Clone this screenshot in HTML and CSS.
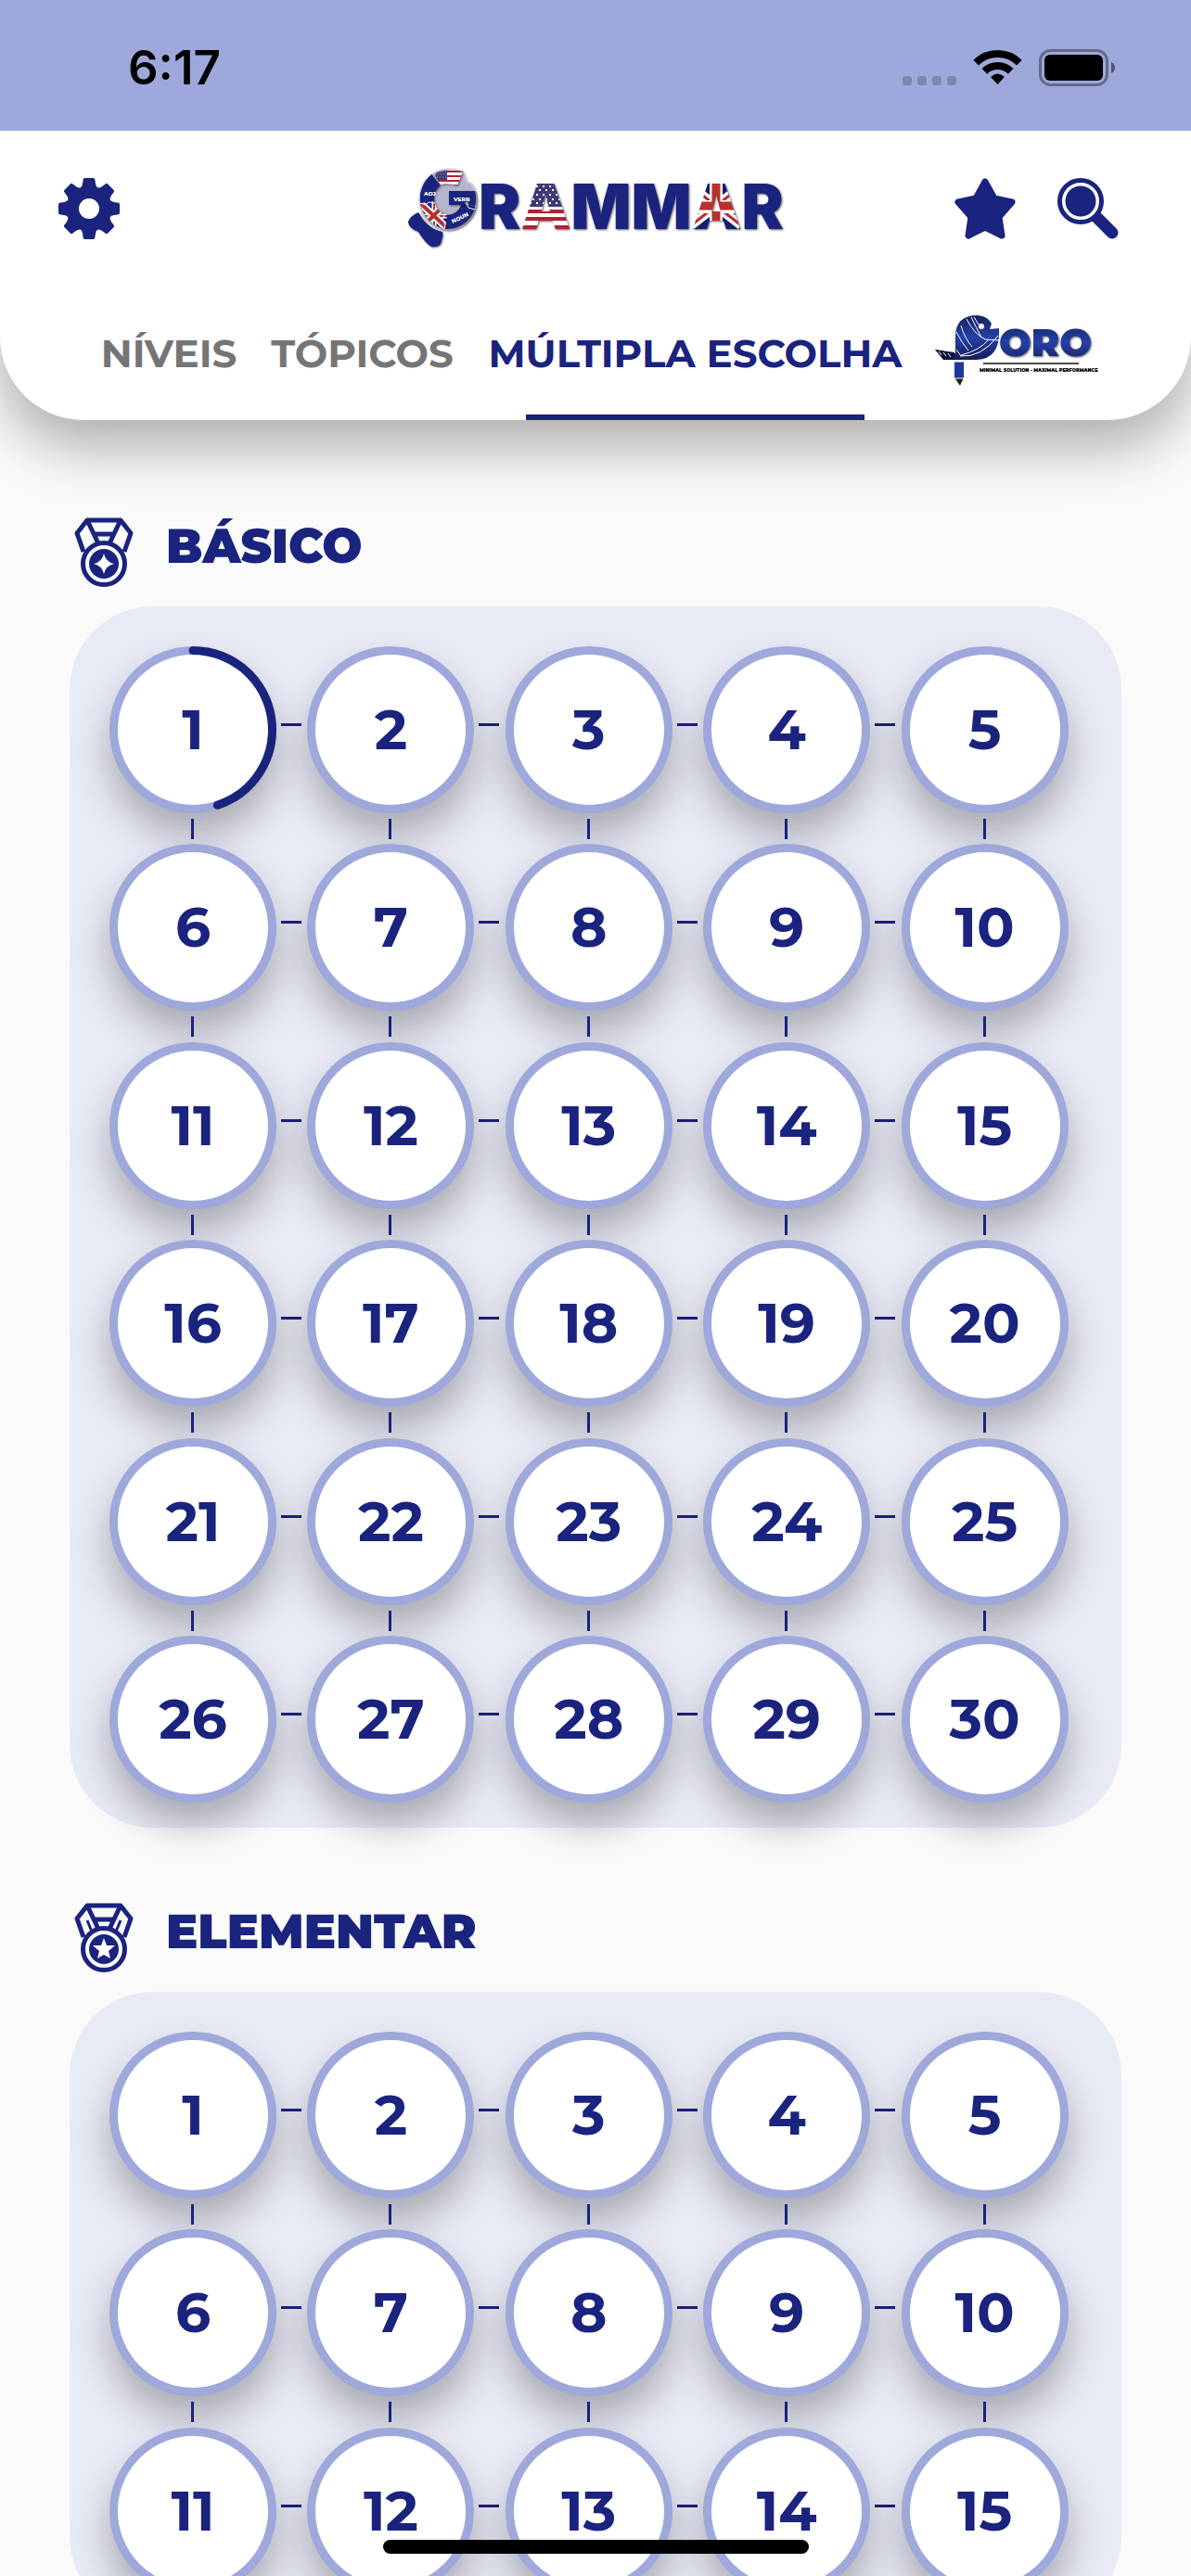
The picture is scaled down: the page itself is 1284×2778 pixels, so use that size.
FILE: index.html
```html
<!DOCTYPE html>
<html lang="pt-BR">

<head>
    <meta charset="UTF-8">
    <meta name="viewport" content="width=device-width, initial-scale=1.0">

    <title>Grammar</title>
    <link rel="stylesheet" href="styles.css">
</head>

<body>
    <div class="status">
        <span class="time">6:17</span>
        <div class="status-icons">
            <svg class="dots" width="58" height="38" viewBox="0 0 58 38">
                <rect x="0" y="28" width="10" height="10" rx="3" />
                <rect x="16" y="28" width="10" height="10" rx="3" />
                <rect x="32" y="28" width="10" height="10" rx="3" />
                <rect x="48" y="28" width="10" height="10" rx="3" />
            </svg>
            <svg width="51" height="38" viewBox="0 0 51 38">
                <path d="M2.2 13.7A33 33 0 0 1 48.8 13.7" fill="none" stroke="#000" stroke-width="8" />
                <path d="M11.4 22.9A20 20 0 0 1 39.6 22.9" fill="none" stroke="#000" stroke-width="8" />
                <path d="M25.5 37L18 29Q25.500 22 33 29Z" />
            </svg>
            <svg width="82" height="40" viewBox="0 0 82 40">
                <rect x="1.500" y="1.500" width="72" height="37" rx="11" fill="none" stroke="#646a8c" stroke-width="3" />
                <rect x="6" y="6" width="63" height="28" rx="6" />
                <path d="M78 14Q82 16 82 20T78 26Z" fill="#4f5470" />
            </svg>
        </div>
    </div>

    <header class="header">
        <div class="bar">
            <button class="icon-btn" aria-label="Configurações">
                <svg width="66" height="66" viewBox="0 0 66 66">
                    <defs>
                        <path id="tooth" d="M29 0H37Q39 0 39.200 1L40 6Q40.500 9.500 42.400 10.400L37.500 22.200A12 12 0 0 0 28.500 22.200L23.600 10.400Q25.500 9.500 26 6L26.800 1Q27 0 29 0Z" />
                    </defs>
                    <use href="#tooth" />
                    <use href="#tooth" transform="rotate(45 33 33)" />
                    <use href="#tooth" transform="rotate(90 33 33)" />
                    <use href="#tooth" transform="rotate(135 33 33)" />
                    <use href="#tooth" transform="rotate(180 33 33)" />
                    <use href="#tooth" transform="rotate(225 33 33)" />
                    <use href="#tooth" transform="rotate(270 33 33)" />
                    <use href="#tooth" transform="rotate(315 33 33)" />
                    <circle cx="33" cy="33" r="17" fill="none" stroke="#1a237e" stroke-width="12" />
                </svg>
            </button>

            <svg class="logo" width="406" height="88" viewBox="0 0 406 88">
                <defs>
                    <pattern id="usa" x="118" y="16" width="60" height="54" patternUnits="userSpaceOnUse">
                        <rect width="60" height="54" fill="#fff" />
                        <rect width="60" height="26" fill="#3c3b78" />
                        <path d="M0 4H60M0 13H60M0 22H60" stroke="#fff" stroke-width="2" stroke-dasharray="2 5" />
                        <path d="M3 8H60M3 18H60" stroke="#fff" stroke-width="2" stroke-dasharray="2 5" />
                        <path d="M0 31H60M0 39H60M0 48H60" stroke="#b22234" stroke-width="4" />
                    </pattern>
                    <pattern id="uk" x="306" y="16" width="54" height="50" patternUnits="userSpaceOnUse">
                        <rect width="54" height="50" fill="#12206b" />
                        <path d="M0 4L54 46M54 4L0 46" stroke="#fff" stroke-width="10" />
                        <path d="M0 4L54 46M54 4L0 46" stroke="#b83030" stroke-width="3" />
                        <path d="M27 0V50M0 26H54" stroke="#fff" stroke-width="14" />
                        <path d="M27 0V50M0 25H54" stroke="#b83030" stroke-width="9" />
                    </pattern>
                    <pattern id="usa-small" x="28" y="2" width="40" height="20" patternUnits="userSpaceOnUse">
                        <rect width="40" height="20" fill="#fff" />
                        <path d="M0 2H40M0 7H40M0 12H40M0 17H40" stroke="#b22234" stroke-width="2" />
                        <rect width="15" height="11" fill="#3c3b78" />
                        <path d="M1 2H15M2 5H15M1 8H15" stroke="#aaa9cc" stroke-dasharray="1 2" />
                    </pattern>
                    <pattern id="uk-small" x="13" y="37" width="32" height="30" patternUnits="userSpaceOnUse">
                        <rect width="32" height="30" fill="#1a237e" />
                        <path d="M0 15H32M16 0V30" stroke="#fff" stroke-width="5" />
                        <path d="M0 15H32M16 0V30" stroke="#b83030" stroke-width="2" />
                        <path d="M2 2L30 28M28 2L2 28" stroke="#fff" stroke-width="8" />
                        <path d="M2 2L30 28M28 2L2 28" stroke="#b83030" stroke-width="4" />
                    </pattern>
                </defs>
                <g class="badge">
                    <path d="M12 48Q3 52 1 58Q1 65 12 69Q20 82 26 85Q33 86 36 82Q39 74 38 69Q22 66 12 48Z" fill="#1a237e" />
                    <path d="M44 1Q54 1 60 5L64 15L69 17Q74 24 75 34A31 33 0 1 1 44 1Z" fill="#b5b6cc" stroke="#d5d8ea" stroke-width="1" />
                </g>
                <g class="badge" fill="none" stroke-width="15">
                    <path d="M31 13A23 25 0 0 0 22 39" stroke="#1a237e" />
                    <path d="M41 58A23 25 0 0 0 66 40" stroke="#1a237e" />
                    <path d="M22 37A23 25 0 0 0 42 58" stroke="url(#uk-small)" />
                </g>
                <g class="badge">
                    <path d="M32 5Q45 0 60 4L54 19Q45 16 36 18L30 8Z" fill="url(#usa-small)" />
                    <path d="M45 25H73Q75 33 73 41L67 40L65 36L61 40H45Z" fill="#1a237e" />
                </g>
                <path d="M14 38L20 40L23 37L30 38M40 66L41 60L38 57L40 51M63 37L66 43L73 45" fill="none" stroke="#fff" stroke-width="1" />
                <g class="logo-tiny">
                    <text x="18" y="30">ADJ</text>
                    <text x="50" y="36">VERB</text>
                    <text x="49" y="60" transform="rotate(-25 49 60)">NOUN</text>
                </g>
                <text class="logo-text" x="77" y="66">R<tspan fill="url(#usa)">A</tspan>MM<tspan fill="url(#uk)">A</tspan>R</text>
            </svg>

            <div class="actions">
                <button class="icon-btn" aria-label="Favoritos">
                    <svg width="66" height="66" viewBox="0 0 66 66">
                        <path d="M33 4L43 22L62 26L48 42L51 62L33 53L15 62L18 42L4 26L23 22Z" fill="#1a237e" stroke="#1a237e" stroke-width="7" stroke-linejoin="round" />
                    </svg>
                </button>
                <button class="icon-btn" aria-label="Pesquisar">
                    <svg width="66" height="66" viewBox="0 0 66 66">
                        <path d="M42 42L59 59" stroke="#1a237e" stroke-width="13" stroke-linecap="round" />
                        <circle cx="25" cy="25" r="22.500" fill="#fff" stroke="#1a237e" stroke-width="5" />
                        <circle cx="25" cy="25" r="16.500" />
                    </svg>
                </button>
            </div>
        </div>

        <nav class="tabs">
            <a class="tab" href="#niveis">NÍVEIS</a>
            <a class="tab" href="#topicos">TÓPICOS</a>
            <a class="tab active" href="#multipla">MÚLTIPLA ESCOLHA</a>
            <a class="tab" href="#poro" aria-label="Poro">
                <svg class="poro" width="172" height="82" viewBox="0 0 172 82">
                    <defs>
                        <linearGradient id="blue" x1="0" y1="0" x2="0" y2="1">
                            <stop offset="0" stop-color="#16205f" />
                            <stop offset=".5" stop-color="#2440a8" />
                            <stop offset="1" stop-color="#141c58" />
                        </linearGradient>
                    </defs>
                    <path d="M0 37L22 41V23Q22 0 46 0Q57 1 61 9L59 15L69 14Q71 47 45 48H12Z" fill="url(#blue)" />
                    <path d="M0 37L21 40V48H9Z" fill="#0c1238" />
                    <path d="M21 50H31V67L27 75L21 67Z" fill="#2036a0" />
                    <path d="M21 67H31L27 76Z" fill="#222" />
                    <path d="M34 4Q42 20 54 26L69 27M39 2Q44 12 50 24M28 11Q32 25 40 34M23 18Q29 30 36 38M27 44Q50 46 68 22M28 43Q48 38 58 26M23 37L28 44M21 50H31M21 68H31M42 2L49 13" fill="none" stroke="#fff" stroke-width="1" />
                    <path d="M4 39L7 43M9 40L12 44M14 41L17 45" stroke="#fff" stroke-width="1" />
                    <circle cx="50" cy="12" r="3" fill="#fff" />
                    <path d="M52 52H155" stroke="#111" stroke-width="1.500" />
                    <text class="poro-text" x="69" y="44" fill="url(#blue)">ORO</text>
                    <text class="poro-tiny" x="48" y="61">MINIMAL SOLUTION - MAXIMAL PERFORMANCE</text>
                </svg>
            </a>
        </nav>
    </header>

    <main class="content">
        <section>
            <div class="heading">
                <svg class="medal" width="62" height="76" viewBox="0 0 62 76">
                    <path d="M9 37L2 17L13 3H49L60 17L53 37M13 3L25 28M49 3L37 28M19 18H43" />
                    <circle cx="31" cy="50" r="22.500" />
                    <circle class="fill" cx="31" cy="50" r="16" />
                    <path class="hole" d="M31 39Q33 48 42 50Q33 52 31 61Q29 52 20 50Q29 48 31 39Z" />
                </svg>
                <h2>BÁSICO</h2>
            </div>
            <div class="panel">
                <div class="cell"><button class="level">1<svg class="progress" viewBox="0 0 180 180"><circle cx="90" cy="90" r="85.500" pathLength="100" stroke-dasharray="45 100" /></svg></button></div>
                <div class="cell"><button class="level">2</button></div>
                <div class="cell"><button class="level">3</button></div>
                <div class="cell"><button class="level">4</button></div>
                <div class="cell"><button class="level">5</button></div>
                <div class="cell"><button class="level">6</button></div>
                <div class="cell"><button class="level">7</button></div>
                <div class="cell"><button class="level">8</button></div>
                <div class="cell"><button class="level">9</button></div>
                <div class="cell"><button class="level">10</button></div>
                <div class="cell"><button class="level">11</button></div>
                <div class="cell"><button class="level">12</button></div>
                <div class="cell"><button class="level">13</button></div>
                <div class="cell"><button class="level">14</button></div>
                <div class="cell"><button class="level">15</button></div>
                <div class="cell"><button class="level">16</button></div>
                <div class="cell"><button class="level">17</button></div>
                <div class="cell"><button class="level">18</button></div>
                <div class="cell"><button class="level">19</button></div>
                <div class="cell"><button class="level">20</button></div>
                <div class="cell"><button class="level">21</button></div>
                <div class="cell"><button class="level">22</button></div>
                <div class="cell"><button class="level">23</button></div>
                <div class="cell"><button class="level">24</button></div>
                <div class="cell"><button class="level">25</button></div>
                <div class="cell"><button class="level">26</button></div>
                <div class="cell"><button class="level">27</button></div>
                <div class="cell"><button class="level">28</button></div>
                <div class="cell"><button class="level">29</button></div>
                <div class="cell"><button class="level">30</button></div>
            </div>
        </section>

        <section>
            <div class="heading">
                <svg class="medal" width="62" height="76" viewBox="0 0 62 76">
                    <path d="M9 37L2 17L13 3H49L60 17L53 37M13 3L25 28M49 3L37 28M19 18H43" />
                    <path class="thin" d="M13 19L18 31M49 19L44 31" />
                    <circle cx="31" cy="50" r="22.500" />
                    <circle class="fill" cx="31" cy="50" r="16" />
                    <path class="hole" d="M31 38L34 46L43 46L36 52L38 60L31 56L24 60L26 52L19 46L28 46Z" />
                </svg>
                <h2>ELEMENTAR</h2>
            </div>
            <div class="panel">
                <div class="cell"><button class="level">1</button></div>
                <div class="cell"><button class="level">2</button></div>
                <div class="cell"><button class="level">3</button></div>
                <div class="cell"><button class="level">4</button></div>
                <div class="cell"><button class="level">5</button></div>
                <div class="cell"><button class="level">6</button></div>
                <div class="cell"><button class="level">7</button></div>
                <div class="cell"><button class="level">8</button></div>
                <div class="cell"><button class="level">9</button></div>
                <div class="cell"><button class="level">10</button></div>
                <div class="cell"><button class="level">11</button></div>
                <div class="cell"><button class="level">12</button></div>
                <div class="cell"><button class="level">13</button></div>
                <div class="cell"><button class="level">14</button></div>
                <div class="cell"><button class="level">15</button></div>
            </div>
        </section>
    </main>

    <div class="home-bar"></div>
</body>

</html>
```

FILE: styles.css
```css
* {
    box-sizing: border-box;
}

body {
    margin: 0;
    height: 100vh;
    display: flex;
    flex-direction: column;
    overflow: hidden;
    background-color: #fafafa;
    color: #1a237e;
    font-family: Montserrat, Inter, sans-serif;
}

svg {
    display: block;
    overflow: visible;
}

button {
    font: inherit;
    color: inherit;
    padding: 0;
    border: none;
    background: none;
    cursor: pointer;
}

/* status bar */
.status {
    flex: none;
    height: 141px;
    padding: 4px 82px 0 138px;
    display: flex;
    align-items: center;
    justify-content: space-between;
    background-color: #9fa8da;
    color: #000;
    position: relative;
    z-index: 3;
}

.time {
    font-family: Inter, sans-serif;
    font-size: 51px;
    font-weight: 600;
    line-height: 60px;
}

.status-icons {
    display: flex;
    align-items: center;
    gap: 19px;
}

.dots {
    fill: #7f86ae;
}

/* header */
.header {
    flex: none;
    position: relative;
    z-index: 2;
    background-color: #fff;
    border-radius: 0 0 90px 90px;
    box-shadow: 0 30px 60px rgba(0, 0, 0, 0.3);
}

.bar {
    height: 168px;
    padding: 0 63px;
    display: grid;
    grid-template-columns: 1fr auto 1fr;
    align-items: center;
}

.icon-btn {
    justify-self: start;
    fill: #1a237e;
}

.actions {
    display: flex;
    gap: 45px;
    justify-self: end;
    padding-right: 15px;
}

.logo-text {
    font-family: Inter, sans-serif;
    font-size: 68px;
    font-weight: 900;
    fill: #1a237e;
    filter: drop-shadow(1px 1px 1px rgba(0, 0, 0, 0.6));
}

.badge {
    filter: drop-shadow(1px 1px 1px rgba(0, 0, 0, 0.5));
}

.logo-tiny {
    font-size: 6px;
    font-weight: 800;
    fill: #fff;
}

.tabs {
    height: 144px;
    padding: 0 87px 0 91px;
    display: grid;
    grid-template-columns: 182fr 235fr 483fr 206fr;
}

.tab {
    display: flex;
    align-items: center;
    justify-content: center;
    white-space: nowrap;
    color: #757575;
    font-size: 42px;
    font-weight: 700;
    text-decoration: none;
    position: relative;
}

.tab.active {
    color: #1a237e;
}

.tab.active::after {
    content: "";
    position: absolute;
    left: 59px;
    right: 59px;
    bottom: 0;
    height: 6px;
    background-color: #1a237e;
}

.poro-text {
    font-size: 41px;
    font-weight: 900;
    filter: drop-shadow(1px 1px 1px rgba(0, 0, 0, 0.6));
}

.poro-tiny {
    font-size: 5px;
    font-weight: 900;
    fill: #000;
}

/* levels */
.content {
    flex: 1;
    min-height: 0;
    padding: 24px 75px 0;
    overflow-y: auto;
    scrollbar-width: none;
}

.heading {
    height: 177px;
    padding: 60px 6px 0;
    display: flex;
    align-items: center;
    gap: 36px;
}

.heading h2 {
    margin: 0 0 14px;
    font-size: 51px;
    font-weight: 900;
    line-height: 60px;
}

.medal {
    fill: none;
    stroke: #1a237e;
    stroke-width: 5;
    stroke-linejoin: round;
}

.medal .thin {
    stroke-width: 3;
}

.medal .fill {
    fill: #1a237e;
    stroke: none;
}

.medal .hole {
    fill: #fff;
    stroke: none;
}

.panel {
    display: grid;
    grid-template-columns: repeat(5, 1fr);
    padding: 43px 24px 27px 43px;
    background-color: #e8eaf6;
    border-radius: 90px;
}

.cell {
    aspect-ratio: 1;
    position: relative;
}

/* last row has no space for a connector below */
.cell:nth-last-child(-n+5) {
    aspect-ratio: auto;
}

.level {
    display: block;
    position: relative;
    width: 180px;
    height: 180px;
    border: 9px solid #9fa8da;
    border-radius: 50%;
    background-color: #fff;
    box-shadow: 0 24px 42px rgba(0, 0, 0, 0.28);
    font-size: 60px;
    font-weight: 700;
    line-height: 70px;
}

.progress {
    position: absolute;
    inset: -9px;
    width: 180px;
    height: 180px;
    fill: none;
    stroke: #1a237e;
    stroke-width: 9;
    stroke-linecap: round;
    transform: rotate(-90deg);
}

.cell:not(:nth-child(5n))::before,
.cell:not(:nth-last-child(-n+5))::after {
    content: "";
    position: absolute;
    background-color: #1a237e;
}

.cell:not(:nth-child(5n))::before {
    left: 185px;
    top: 83px;
    width: 22px;
    height: 3px;
}

.cell:not(:nth-last-child(-n+5))::after {
    left: 88px;
    top: 186px;
    width: 3px;
    height: 22px;
}

.home-bar {
    position: fixed;
    z-index: 4;
    left: 50%;
    bottom: 24px;
    width: 459px;
    height: 15px;
    margin-left: -229px;
    border-radius: 8px;
    background-color: #000;
}
```
